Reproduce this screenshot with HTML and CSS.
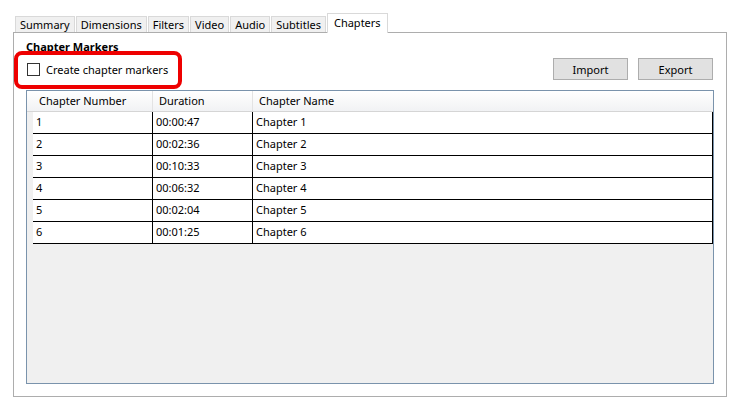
FILE: index.html
```html
<!DOCTYPE html>
<html>
<head>
    <title>Chapters</title>
    <meta name="viewport" content="width=device-width, initial-scale=1">
    <link rel="stylesheet" href="styles.css">
</head>
<body>

<div class="window">
    <!-- Tab strip -->
    <div class="tabs">
        <div class="tab">Summary</div>
        <div class="tab">Dimensions</div>
        <div class="tab">Filters</div>
        <div class="tab">Video</div>
        <div class="tab">Audio</div>
        <div class="tab">Subtitles</div>
        <div class="tab active">Chapters</div>
    </div>

    <!-- Chapters page -->
    <div class="panel">
        <div class="section-title">Chapter Markers</div>

        <div class="toolbar">
            <label class="check">
                <span class="box"></span>
                Create chapter markers
            </label>
            <div class="buttons">
                <button type="button" class="btn">Import</button>
                <button type="button" class="btn">Export</button>
            </div>
        </div>

        <div class="grid">
            <div class="row head">
                <div class="gutter"></div>
                <div class="cell">Chapter Number</div>
                <div class="cell">Duration</div>
                <div class="cell">Chapter Name</div>
            </div>
            <div class="row">
                <div class="gutter"></div>
                <div class="cell">1</div>
                <div class="cell">00:00:47</div>
                <div class="cell">Chapter 1</div>
            </div>
            <div class="row">
                <div class="gutter"></div>
                <div class="cell">2</div>
                <div class="cell">00:02:36</div>
                <div class="cell">Chapter 2</div>
            </div>
            <div class="row">
                <div class="gutter"></div>
                <div class="cell">3</div>
                <div class="cell">00:10:33</div>
                <div class="cell">Chapter 3</div>
            </div>
            <div class="row">
                <div class="gutter"></div>
                <div class="cell">4</div>
                <div class="cell">00:06:32</div>
                <div class="cell">Chapter 4</div>
            </div>
            <div class="row">
                <div class="gutter"></div>
                <div class="cell">5</div>
                <div class="cell">00:02:04</div>
                <div class="cell">Chapter 5</div>
            </div>
            <div class="row">
                <div class="gutter"></div>
                <div class="cell">6</div>
                <div class="cell">00:01:25</div>
                <div class="cell">Chapter 6</div>
            </div>
        </div>

        <!-- Highlight annotation -->
        <div class="highlight"></div>
    </div>
</div>

</body>
</html>
```

FILE: styles.css
```css
/* Reset */
* {
    margin: 0;
    padding: 0;
    box-sizing: border-box;
    font-family: "Noto Sans", sans-serif;
}

body {
    background: #ffffff;
    color: #000000;
    font-size: 11px;
    padding: 13px 7px 6px 13px;
    height: 403px;
    overflow: hidden;
}

.window {
    display: flex;
    flex-direction: column;
    height: 100%;
}

/* Tabs */
.tabs {
    display: flex;
    align-items: flex-end;
    height: 19px;
    padding-left: 2px;
    position: relative;
    z-index: 1;
}

.tab {
    height: 16px;
    line-height: 15px;
    padding: 0 4px;
    background: #f0f0f0;
    border: 1px solid #d9d9d9;
    border-bottom: none;
    margin-right: 1px;
}

.tab.active {
    height: 20px;
    line-height: 17px;
    padding: 0 6px;
    background: #ffffff;
    margin-bottom: -1px;
}

/* Panel */
.panel {
    flex: 1;
    position: relative;
    border: 1px solid #adadad;
    background: #ffffff;
    padding: 6px 12px 12px 12px;
    display: flex;
    flex-direction: column;
}

.section-title {
    font-weight: bold;
    line-height: 16px;
}

.toolbar {
    display: flex;
    justify-content: space-between;
    align-items: center;
    margin-top: 3px;
    margin-right: 1px;
    height: 22px;
}

.check {
    display: flex;
    align-items: center;
    gap: 6px;
    padding-left: 1px;
}

.box {
    width: 13px;
    height: 13px;
    border: 1px solid #333333;
    background: #ffffff;
}

.buttons {
    display: flex;
    gap: 10px;
}

.btn {
    width: 75px;
    height: 22px;
    background: #e1e1e1;
    border: 1px solid #adadad;
    font-size: 11px;
    color: #000;
}

/* Grid */
.grid {
    flex: 1;
    margin-top: 10px;
    border: 1px solid #7a93ac;
    background: #f0f0f0;
}

.row {
    display: grid;
    grid-template-columns: 6px 120px 100px 1fr;
    height: 22px;
}

.row .cell {
    background: #ffffff;
    border-right: 1px solid #000;
    border-bottom: 1px solid #000;
    padding-left: 3px;
    line-height: 20px;
}

.row.head {
    height: 21px;
    background: linear-gradient(#ffffff, #f1f2f4);
    border-bottom: 1px solid #d5d5d5;
}

.row.head .cell {
    background: none;
    border-right: 1px solid #e3e3e3;
    border-bottom: none;
    padding-left: 6px;
}

.row.head .cell:last-child {
    border-right: none;
}

/* Red callout around the checkbox */
.highlight {
    position: absolute;
    left: 0;
    top: 18px;
    width: 168px;
    height: 38px;
    border: 4px solid #ee0000;
    border-radius: 8px;
}
```
